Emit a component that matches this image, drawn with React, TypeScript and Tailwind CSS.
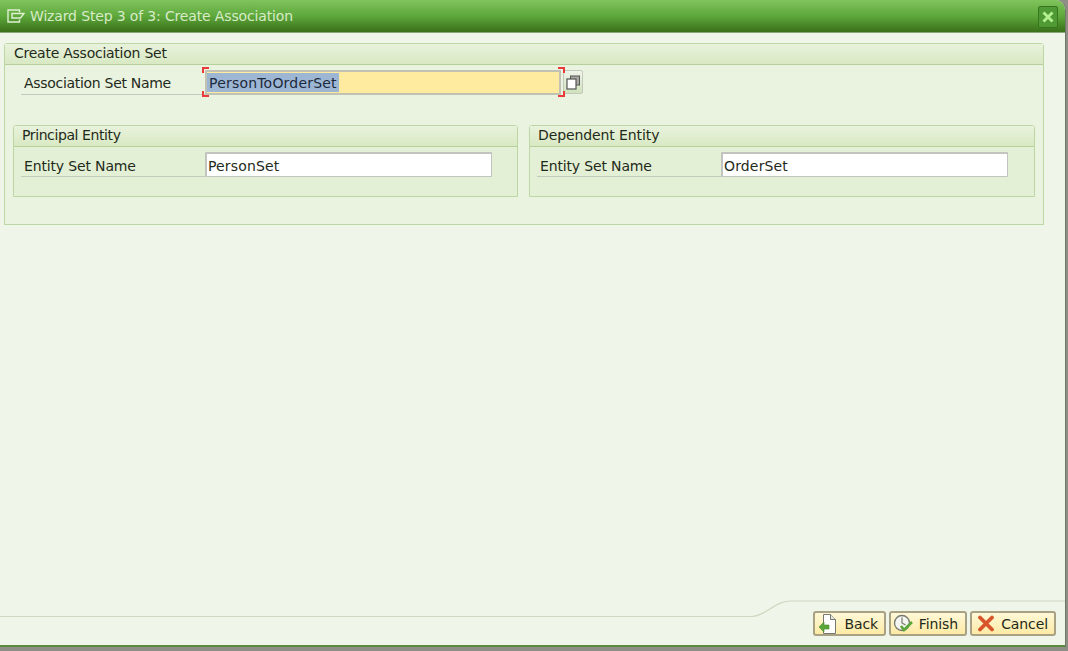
import type { ReactNode } from 'react'

const font = "font-['DejaVu_Sans',sans-serif]"

function FieldRow({ label, value }: { label: string; value: string }) {
  return (
    <div className="flex items-stretch h-[25px]">
      <div className="w-[184px] shrink-0 border-b border-[#c3c9bd] pl-[3px] pt-[5px] leading-[18px] text-[#1f2a1a] tracking-[-0.15px]">
        {label}
      </div>
      <div className="w-[287px] h-[25px] shrink-0 bg-white border border-[#c2c4bf] border-t-2 border-l-2 rounded-[1px] pl-[1px] leading-[25px] text-[#1f2a1a] tracking-[0.15px]">
        {value}
      </div>
    </div>
  )
}

function GroupBox({ title, titleClass, children, className }: { title: string; titleClass?: string; children: ReactNode; className?: string }) {
  return (
    <div className={`border border-[#bcd6a4] rounded-t-[3px] ${className ?? ''}`}>
      <div className={`h-[21px] bg-gradient-to-b from-[#e9f2dc] to-[#d8e9c3] border-b border-[#b6d09c] pl-[8px] leading-[19px] text-[#1f2a1a] ${titleClass ?? ''}`}>
        {title}
      </div>
      {children}
    </div>
  )
}

function BackIcon() {
  return (
    <svg width="20" height="22" viewBox="0 0 20 22" className="shrink-0">
      <path d="M5.5 1.5h7l5 5v14h-12z" fill="#fff" stroke="#77786f" />
      <path d="M12.5 1.5v5h5" fill="#e6e6e0" stroke="#77786f" />
      <path d="M1 14l5-5v3h5v4H6v3z" fill="#5aa63a" stroke="#3f8a28" strokeWidth="0.6" />
    </svg>
  )
}

function FinishIcon() {
  return (
    <svg width="22" height="20" viewBox="0 0 22 20" className="shrink-0">
      <circle cx="9" cy="9" r="7.5" fill="#f4f4f0" stroke="#77786f" strokeWidth="1.3" />
      <path d="M9 3.5V9l3.5 2" fill="none" stroke="#77786f" strokeWidth="1.2" />
      <path d="M8 12l3 4 8-8" fill="none" stroke="#5aa63a" strokeWidth="2.6" />
    </svg>
  )
}

function CancelIcon() {
  return (
    <svg width="18" height="18" viewBox="0 0 18 18" className="shrink-0">
      <path d="M3 2.5l12 12M15 2.5l-12 12" fill="none" stroke="#d8542a" strokeWidth="3.8" strokeLinecap="round" />
    </svg>
  )
}

function FooterButton({ icon, label, className }: { icon: ReactNode; label: string; className: string }) {
  return (
    <button className={`flex items-center h-[25px] border-2 border-[#a8a184] rounded-[3px] bg-gradient-to-b from-[#fff8d8] to-[#fdeaa4] text-[#1f2a1a] ${className}`}>
      {icon}
      <span className="ml-auto leading-none">{label}</span>
    </button>
  )
}

export default function App() {
  return (
    <div className={`w-[1068px] h-[651px] overflow-hidden bg-[#8e8e86] ${font} text-[14px] tracking-[-0.1px]`}>
      <div className="w-[1066px] h-[647px] flex flex-col bg-[#f0f5ea] border-r border-[#6f7a66] border-b-[2px] border-b-[#5b8a3c] rounded-tr-[10px] overflow-hidden">
        {/* title bar */}
        <div className="h-[33px] shrink-0 flex items-center bg-gradient-to-b from-[#7fc45c] via-[#5ea83c] to-[#3a7019] border-b border-[#8ba57c] pl-[7px] pr-[7px]">
          <svg width="18" height="14" viewBox="0 0 18 14" className="shrink-0">
            <path d="M12.5 3.5V1H1v12h11.5v-2.5" fill="none" stroke="#dff0d2" strokeWidth="1.4" />
            <path d="M5 4.5h12l-3.5 4.5H5z" fill="none" stroke="#dff0d2" strokeWidth="1.4" />
          </svg>
          <span className="ml-[5px] text-[#d7ebc6] leading-none tracking-[-0.15px]">Wizard Step 3 of 3: Create Association</span>
          <div className="ml-auto mt-[2px] w-[20px] h-[22px] flex items-center justify-center bg-[#4f9a34] border border-[#38751f] rounded-[2px]">
            <svg width="14" height="14" viewBox="0 0 14 14">
              <path d="M2.5 2.5l9 9M11.5 2.5l-9 9" fill="none" stroke="#b5f08f" strokeWidth="2.8" />
            </svg>
          </div>
        </div>

        {/* main form */}
        <div className="flex-1 pl-[4px] pr-[21px] pt-[10px]">
          <GroupBox title="Create Association Set" titleClass="tracking-[-0.25px] pl-[9px]" className="h-[182px] bg-[#eaf3df]">
            <div className="pl-[16px] pt-[5px] flex items-start h-[60px]">
              <div className="w-[184px] h-[25px] shrink-0 border-b border-[#c3c9bd] pl-[3px] pt-[4px] leading-[18px] text-[#1f2a1a] tracking-[-0.3px]">
                Association Set Name
              </div>
              <div className="relative w-[356px] h-[25px] shrink-0 bg-[#ffeb9f] border-2 border-[#c2c2b4] rounded-[1px] tracking-[0.2px]">
                <span className="block w-fit h-[19px] mt-[1px] bg-[#9db6d4] text-[#1c2a3c] px-[2px] leading-[21px]">PersonToOrderSet</span>
                <span className="absolute -left-[5px] -top-[5px] w-[7px] h-[6px] border-t-2 border-l-2 border-[#ea3b3b]" />
                <span className="absolute -left-[5px] -bottom-[4px] w-[7px] h-[6px] border-b-2 border-l-2 border-[#ea3b3b]" />
                <span className="absolute -right-[6px] -top-[5px] w-[7px] h-[6px] border-t-2 border-r-2 border-[#ea3b3b]" />
                <span className="absolute -right-[6px] -bottom-[4px] w-[7px] h-[6px] border-b-2 border-r-2 border-[#ea3b3b]" />
              </div>
              <div className="ml-[2px] w-[20px] h-[24px] shrink-0 flex items-center justify-center border border-[#c5c8bd] rounded-[2px] bg-gradient-to-b from-[#f0f5ea] to-[#cfe2ba]">
                <svg width="14" height="15" viewBox="0 0 14 15">
                  <rect x="4.5" y="1" width="9" height="9" fill="#a9a9a4" stroke="#555" />
                  <rect x="1" y="4" width="9" height="10" fill="#fff" stroke="#555" strokeWidth="1.2" />
                </svg>
              </div>
            </div>
            <div className="flex gap-[11px] pl-[8px]">
              <GroupBox title="Principal Entity" titleClass="tracking-[-0.4px]" className="w-[505px] h-[72px] bg-[#e4f0d5]">
                <div className="pl-[7px] pt-[5px]">
                  <FieldRow label="Entity Set Name" value="PersonSet" />
                </div>
              </GroupBox>
              <GroupBox title="Dependent Entity" className="w-[506px] h-[72px] bg-[#e4f0d5]">
                <div className="pl-[7px] pt-[5px]">
                  <FieldRow label="Entity Set Name" value="OrderSet" />
                </div>
              </GroupBox>
            </div>
          </GroupBox>
        </div>

        {/* footer */}
        <div className="relative h-[46px] shrink-0 flex justify-end items-start gap-[3px] pt-[12px] pr-[9px]">
          <svg width="1066" height="18" viewBox="0 0 1066 18" className="absolute left-0 top-0">
            <path d="M0 17.5H752C765 17.5 775 2 790 2H1066" fill="none" stroke="#ccd8bf" strokeWidth="1.2" />
          </svg>
          <FooterButton icon={<BackIcon />} label="Back" className="w-[73px] pl-[3px] pr-[6px]" />
          <FooterButton icon={<FinishIcon />} label="Finish" className="w-[78px] pl-[2px] pr-[7px]" />
          <FooterButton icon={<CancelIcon />} label="Cancel" className="w-[86px] pl-[5px] pr-[6px]" />
        </div>
      </div>
    </div>
  )
}
